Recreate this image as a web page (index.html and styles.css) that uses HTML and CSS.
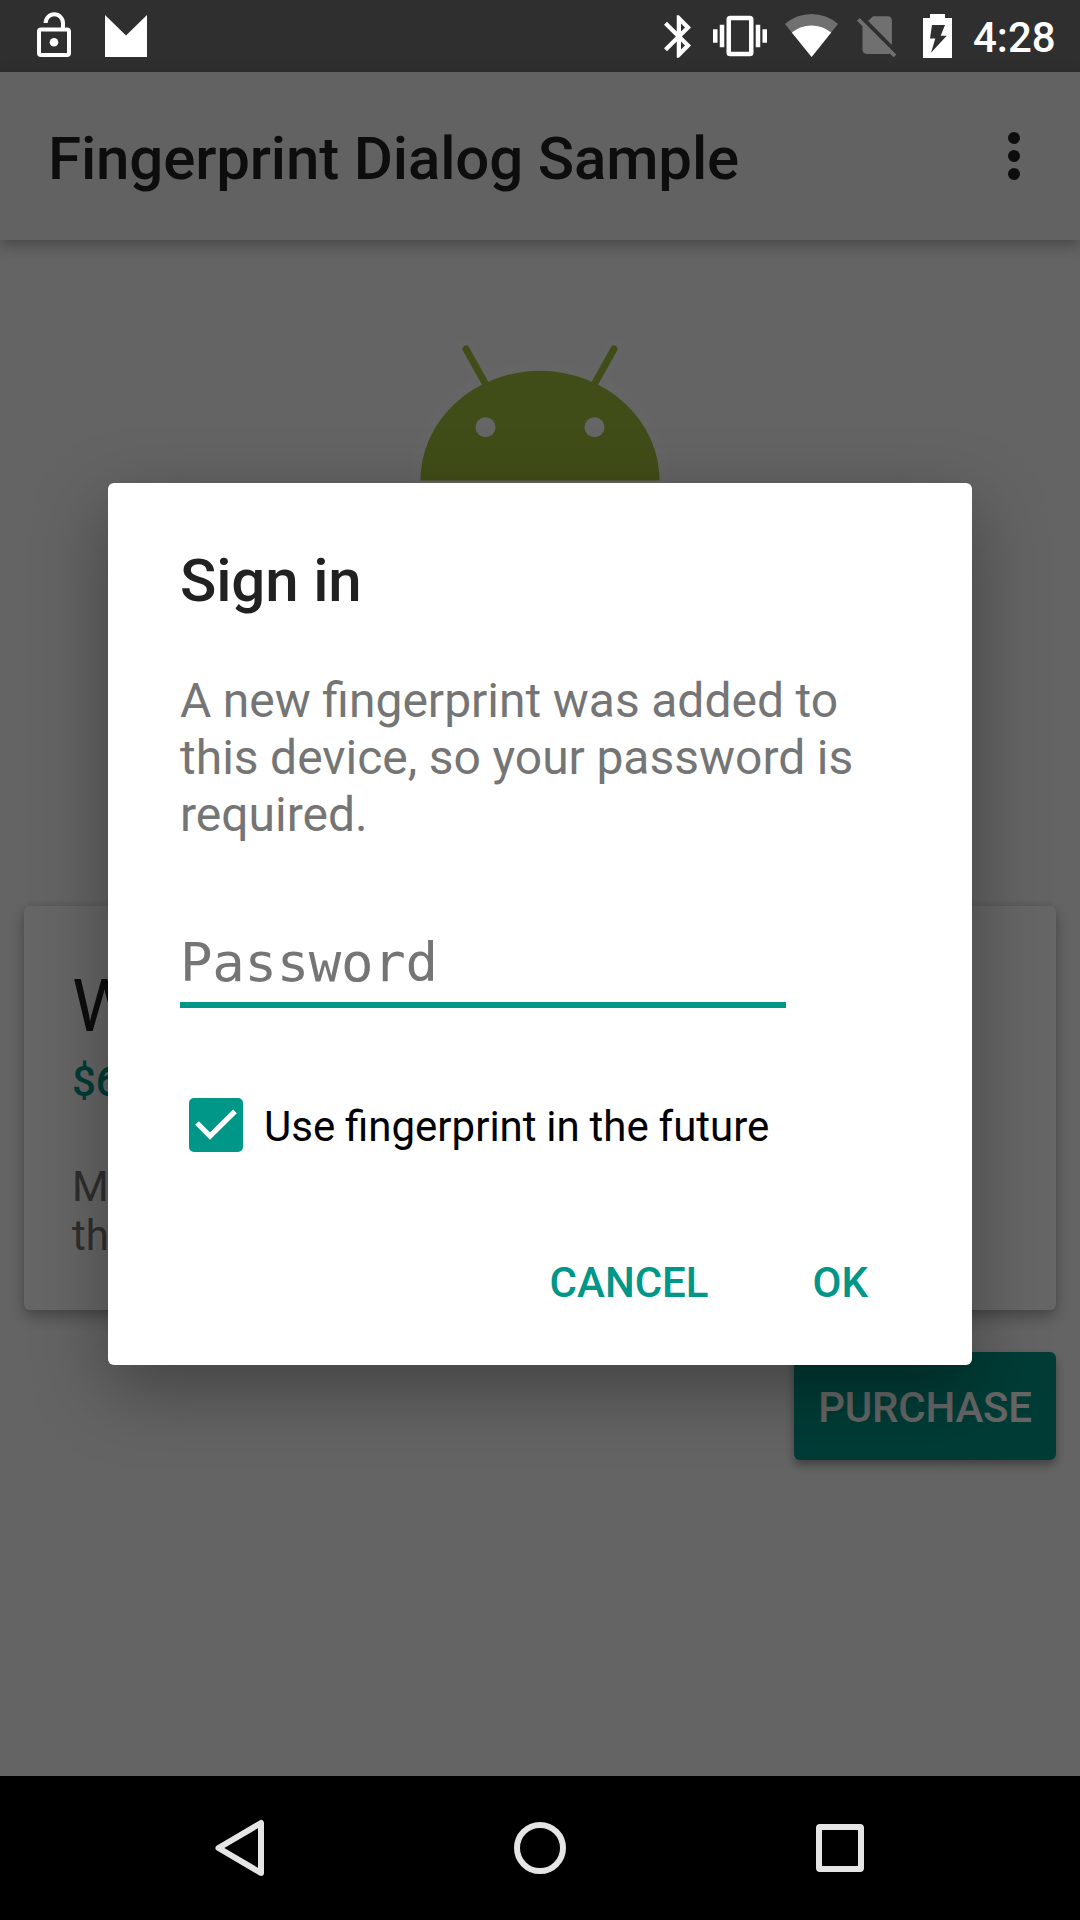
FILE: index.html
```html
<!DOCTYPE html>
<html lang="en">
<head>
<meta charset="utf-8">
<title>Fingerprint Dialog Sample</title>
<link rel="stylesheet" href="styles.css">
</head>
<body>
<div class="screen">
  <header class="status">
    <svg class="lock" width="36" height="72" viewBox="36 0 36 72" fill="none" stroke="#fff" stroke-width="4"><rect x="39" y="29.6" width="30" height="25.4" rx="2"/><path d="M45.6 23a8.7 8.7 0 0 1 17.4 0V29"/><circle cx="54" cy="42.3" r="4.3" fill="#fff" stroke="none"/></svg>
    <svg class="mail" width="42" height="42" viewBox="0 0 42 42"><path fill="#fff" d="M0 0l21 20.5L42 0v42H0z"/></svg>
    <div class="indicators">
      <svg class="bluetooth" width="27" height="43" viewBox="5 2 12.71 20" fill="#fff"><path d="M17.71 7.71L12 2h-1v7.59L6.41 5 5 6.41 10.59 12 5 17.59 6.41 19 11 14.41V22h1l5.71-5.71-4.3-4.29 4.3-4.29zM13 5.83l1.88 1.88L13 9.59V5.83zm1.88 10.46L13 18.17v-3.76l1.88 1.88z"/></svg>
      <svg class="vibrate" width="54" height="54" viewBox="0 0 24 24" fill="#fff"><path d="M0 15h2V9H0v6zm3 2h2V7H3v10zm19-8v6h2V9h-2zm-3 8h2V7h-2v10zM16.5 3h-9C6.67 3 6 3.67 6 4.5v15c0 .83.67 1.5 1.5 1.5h9c.83 0 1.5-.67 1.5-1.5v-15c0-.83-.67-1.5-1.5-1.5zM16 19H8V5h8v14z"/></svg>
      <svg class="wifi" width="53" height="72" viewBox="785 0 53 72"><path fill="#707070" d="M785 24A40 40 0 0 1 838 24L811.6 57z"/><path fill="#fff" d="M791.8 32.5A31 31 0 0 1 831.2 32.5L811.6 57z"/></svg>
      <svg class="sim" width="39.4" height="41.5" viewBox="2.38 3 18.74 19.62" fill="#707070"><path d="M18.99 5c0-1.1-.89-2-1.99-2h-7L7.66 5.34 19 16.68 18.99 5zM3.65 3.88L2.38 5.15 5 7.77V19c0 1.1.9 2 2 2h10.01c.35 0 .67-.1.96-.26l1.88 1.88 1.27-1.27L3.65 3.88z"/></svg>
      <svg class="battery" width="29" height="44" viewBox="923 14 29 44"><path fill="#fff" d="M930 14h15v4h7v40h-29V18h7z"/><path fill="#2f2f2f" d="M932 25h13l-4.300 10.800h6L931 52.700l4.300-14.200H930z"/></svg>
      <span class="time">4:28</span>
    </div>
  </header>

  <div class="window">
    <div class="appbar">
      <h1 class="appbar-title">Fingerprint Dialog Sample</h1>
      <svg class="overflow" width="12" height="48" viewBox="0 0 12 48" fill="#212121"><circle cx="6" cy="6" r="6"/><circle cx="6" cy="24" r="6"/><circle cx="6" cy="42" r="6"/></svg>
    </div>
    <main class="content">
      <svg class="robot" width="300" height="241" viewBox="390 320 300 241">
        <g class="robot-glow"><path d="M420.500 480.500a119.500 109.700 0 0 1 239 0z"/><path d="M466 349l19 34M614 349l-19 34"/></g>
        <g class="robot-body"><path d="M420.500 480.500a119.500 109.700 0 0 1 239 0z"/><path class="antenna" d="M466 349l19 34M614 349l-19 34"/></g>
        <circle cx="485.500" cy="427.300" r="10" fill="#fff"/><circle cx="594.500" cy="427.300" r="10" fill="#fff"/>
      </svg>
      <section class="card">
        <h2 class="item-name">W</h2>
        <p class="item-price">$6</p>
        <p class="item-text">M<br>th</p>
      </section>
      <button class="purchase">PURCHASE</button>
    </main>

    <div class="scrim">
      <section class="dialog">
        <h2 class="dialog-title">Sign in</h2>
        <p class="dialog-text">A new fingerprint was added to<br>this device, so your password is<br>required.</p>
        <div class="field">Password</div>
        <div class="check-row">
          <svg class="check" width="54" height="54" viewBox="0 0 54 54"><rect width="54" height="54" rx="5" fill="#009688"/><path d="M8 25l13 13 25-24.600" fill="none" stroke="#fff" stroke-width="5.200"/></svg>
          <span class="check-label">Use fingerprint in the future</span>
        </div>
        <div class="actions"><button class="action">CANCEL</button><button class="action">OK</button></div>
      </section>
    </div>
  </div>

  <nav class="navbar">
    <svg width="72" height="72" viewBox="204 1812 72 72"><path d="M261 1823v50L218.500 1848z"/></svg>
    <svg width="72" height="72" viewBox="0 0 72 72"><circle cx="36" cy="36" r="23"/></svg>
    <svg width="72" height="72" viewBox="0 0 72 72"><rect x="15" y="15" width="42" height="42" rx="1"/></svg>
  </nav>
</div>
</body>
</html>
```
FILE: styles.css
```css
* { box-sizing: border-box; margin: 0; }
body { font-family: Roboto, "Noto Sans", sans-serif; background: #000; }
svg { display: block; flex: none; }
button { border: 0; background: none; padding: 0; font: inherit; }
p, h1, h2 { white-space: nowrap; }

.screen { width: 1080px; height: 1920px; display: flex; flex-direction: column; overflow: hidden; }

.status { height: 72px; flex: none; display: flex; align-items: center; padding: 0 24px 0 36px; background: #2f2f2f; }
.mail { margin-left: 33px; }
.indicators { display: flex; align-items: center; margin-left: auto; }
.bluetooth { margin-top: 1px; }
.vibrate { margin-left: 22px; }
.wifi { margin-left: 18px; }
.sim { margin: 2px 0 0 19px; }
.battery { margin-left: 26.6px; }
.time { width: 83px; margin-left: 21px; padding-top: 3px; font-size: 42px; font-weight: 500; line-height: 48px; color: #fff; white-space: nowrap; }

.window { position: relative; flex: 1; display: flex; flex-direction: column; background: #fafafa; }
.appbar { z-index: 1; height: 168px; flex: none; display: flex; justify-content: space-between; padding: 52px 60px 0 48px; background: #f5f5f5; box-shadow: 0 5px 14px rgba(0, 0, 0, .3); }
.appbar-title { font-size: 60px; font-weight: 500; line-height: 70px; letter-spacing: -.15px; color: #212121; }
.overflow { margin-top: 8px; }

.content { flex: 1; display: flex; flex-direction: column; align-items: center; padding: 80px 24px 0; }
.robot-glow { fill: #fff; stroke: #fff; stroke-width: 20; stroke-linecap: round; opacity: .5; }
.robot-body { fill: #a4c13c; }
.antenna { stroke: #a4c13c; stroke-width: 7; stroke-linecap: round; }

.card { align-self: stretch; height: 404px; margin-top: 345px; padding: 59px 48px 0; border-radius: 6px; background: #fff; box-shadow: 0 7px 16px rgba(0, 0, 0, .28), 0 0 8px rgba(0, 0, 0, .1); }
.item-name { font-size: 72px; font-weight: 400; line-height: 84px; color: #212121; }
.item-price { margin-top: 8px; font-size: 42px; font-weight: 500; line-height: 49px; color: #009688; }
.item-text { margin-top: 56px; font-size: 42px; line-height: 49px; color: #757575; }
.purchase { align-self: flex-end; width: 262px; height: 108px; margin-top: 42px; padding-top: 2px; border-radius: 6px; background: #009688; color: #fff; font-size: 42px; font-weight: 500; letter-spacing: -.2px; box-shadow: 0 5px 10px rgba(0, 0, 0, .35); }

.scrim { position: absolute; inset: 0; z-index: 2; display: flex; justify-content: center; align-items: flex-start; padding-top: 411px; background: rgba(0, 0, 0, .6); }
.dialog { width: 864px; height: 882px; padding: 63px 72px 0; border-radius: 6px; background: #fff; box-shadow: 0 24px 72px rgba(0, 0, 0, .34); }
.dialog-title { font-size: 60px; font-weight: 500; line-height: 70px; letter-spacing: -.15px; color: #212121; }
.dialog-text { margin-top: 56px; font-size: 48px; line-height: 57px; word-spacing: -.4px; color: #757575; }
.field { width: 606px; height: 80px; margin-top: 85px; padding-top: 3px; border-bottom: 6px solid #009688; font: 54px/64px "DejaVu Sans Mono", monospace; letter-spacing: -.3px; color: #757575; }
.check-row { display: flex; align-items: center; gap: 21px; margin: 90px 0 0 9px; font-size: 42px; line-height: 49px; color: #000; white-space: nowrap; }
.check-label { padding-top: 2px; word-spacing: -.6px; }
.actions { display: flex; justify-content: flex-end; gap: 104px; margin-top: 106px; padding-right: 32px; }
.action { font-size: 42px; font-weight: 500; line-height: 49px; color: #009688; }

.navbar { height: 144px; flex: none; display: flex; justify-content: center; align-items: center; gap: 228px; background: #000; }
.navbar svg { fill: none; stroke: #e5e5e5; stroke-width: 6; stroke-linejoin: round; }
```
